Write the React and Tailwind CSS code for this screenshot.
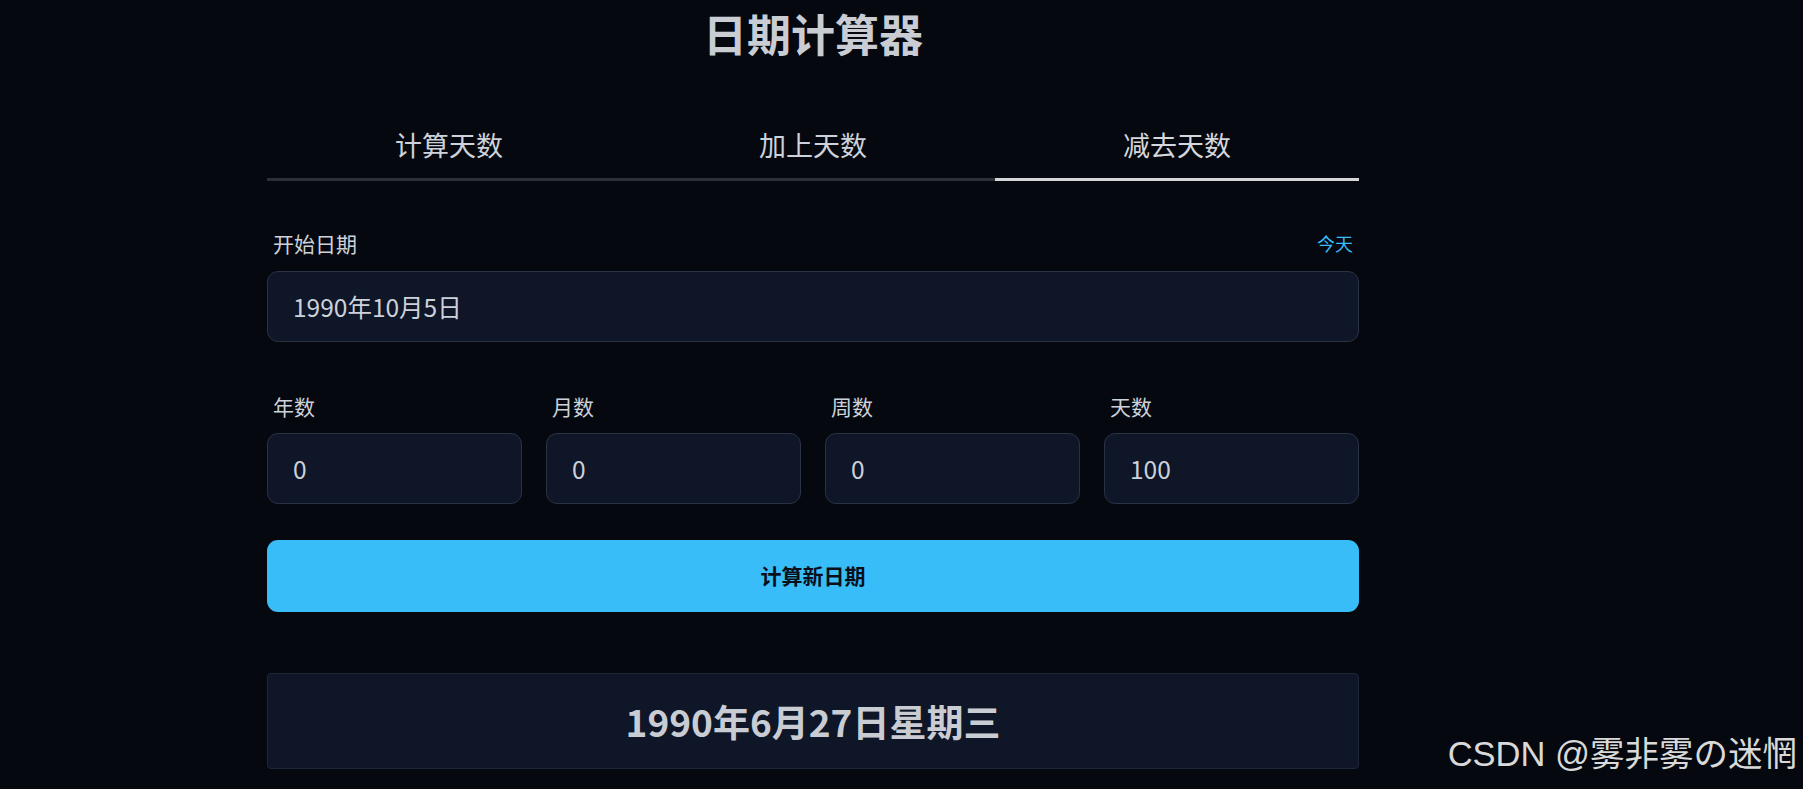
import { useState } from 'react';

const TABS = ['计算天数', '加上天数', '减去天数'];
const FIELDS = [
  { label: '年数', value: '0' },
  { label: '月数', value: '0' },
  { label: '周数', value: '0' },
  { label: '天数', value: '100' },
];

export default function App() {
  const [tab, setTab] = useState(2);

  return (
    <div className="relative min-h-screen overflow-hidden bg-[#05080f] font-['Noto_Sans_CJK_SC',sans-serif] text-[#cdd2da]">
      <div className="ml-[267px] w-[1092px]">
        <h1 className="flex h-[65px] items-center justify-center text-[44px] font-bold leading-none text-[#c9ccd3]">
          日期计算器
        </h1>

        {/* Tabs */}
        <div className="mt-[47px] flex">
          {TABS.map((t, i) => (
            <button
              key={t}
              onClick={() => setTab(i)}
              className={`flex h-[69px] flex-1 items-center justify-center border-b-[3px] pb-[2px] text-[27px] leading-none ${
                tab === i ? 'border-[#d4d5d8] text-[#d4d7dc]' : 'border-[#2c2f36] text-[#cdd2da]'
              }`}
            >
              {t}
            </button>
          ))}
        </div>

        {/* Start date */}
        <div className="mt-[50px] flex h-[24px] items-center justify-between px-[6px]">
          <span className="text-[21px] leading-none">开始日期</span>
          <button className="text-[18px] leading-none text-[#38bdf8]">今天</button>
        </div>
        <input
          readOnly
          value="1990年10月5日"
          className="mt-[16px] block h-[71px] w-full rounded-[11px] border border-[#2a3245] bg-[#0e1628] px-[25px] text-[24.5px] text-[#cdd2da] outline-none"
        />

        {/* Offsets */}
        <div className="mt-[52px] grid grid-cols-4 gap-x-[24px]">
          {FIELDS.map((f) => (
            <div key={f.label}>
              <div className="flex h-[24px] items-center px-[6px] text-[21px] leading-none">{f.label}</div>
              <input
                readOnly
                value={f.value}
                className="mt-[15px] block h-[71px] w-full rounded-[11px] border border-[#2a3245] bg-[#0e1628] px-[25px] text-[24.5px] text-[#cdd2da] outline-none"
              />
            </div>
          ))}
        </div>

        <button className="mt-[36px] flex h-[72px] w-full items-center justify-center rounded-[11px] bg-[#38bdf8] text-[21px] font-bold text-[#0a0f1a]">
          计算新日期
        </button>

        {/* Result */}
        <div className="mt-[61px] flex h-[96px] items-center justify-center rounded-[4px] border border-[#1d2638] bg-[#0e1628]">
          <span className="text-[37px] font-bold leading-none text-[#c9ccd3]">1990年6月27日星期三</span>
        </div>
      </div>

      <div className="absolute right-[6px] top-[737px] font-['Liberation_Sans','Noto_Sans_CJK_JP',sans-serif] text-[34.5px] leading-none text-[#d9d9d9]">
        CSDN @雾非雾の迷惘
      </div>
    </div>
  );
}
